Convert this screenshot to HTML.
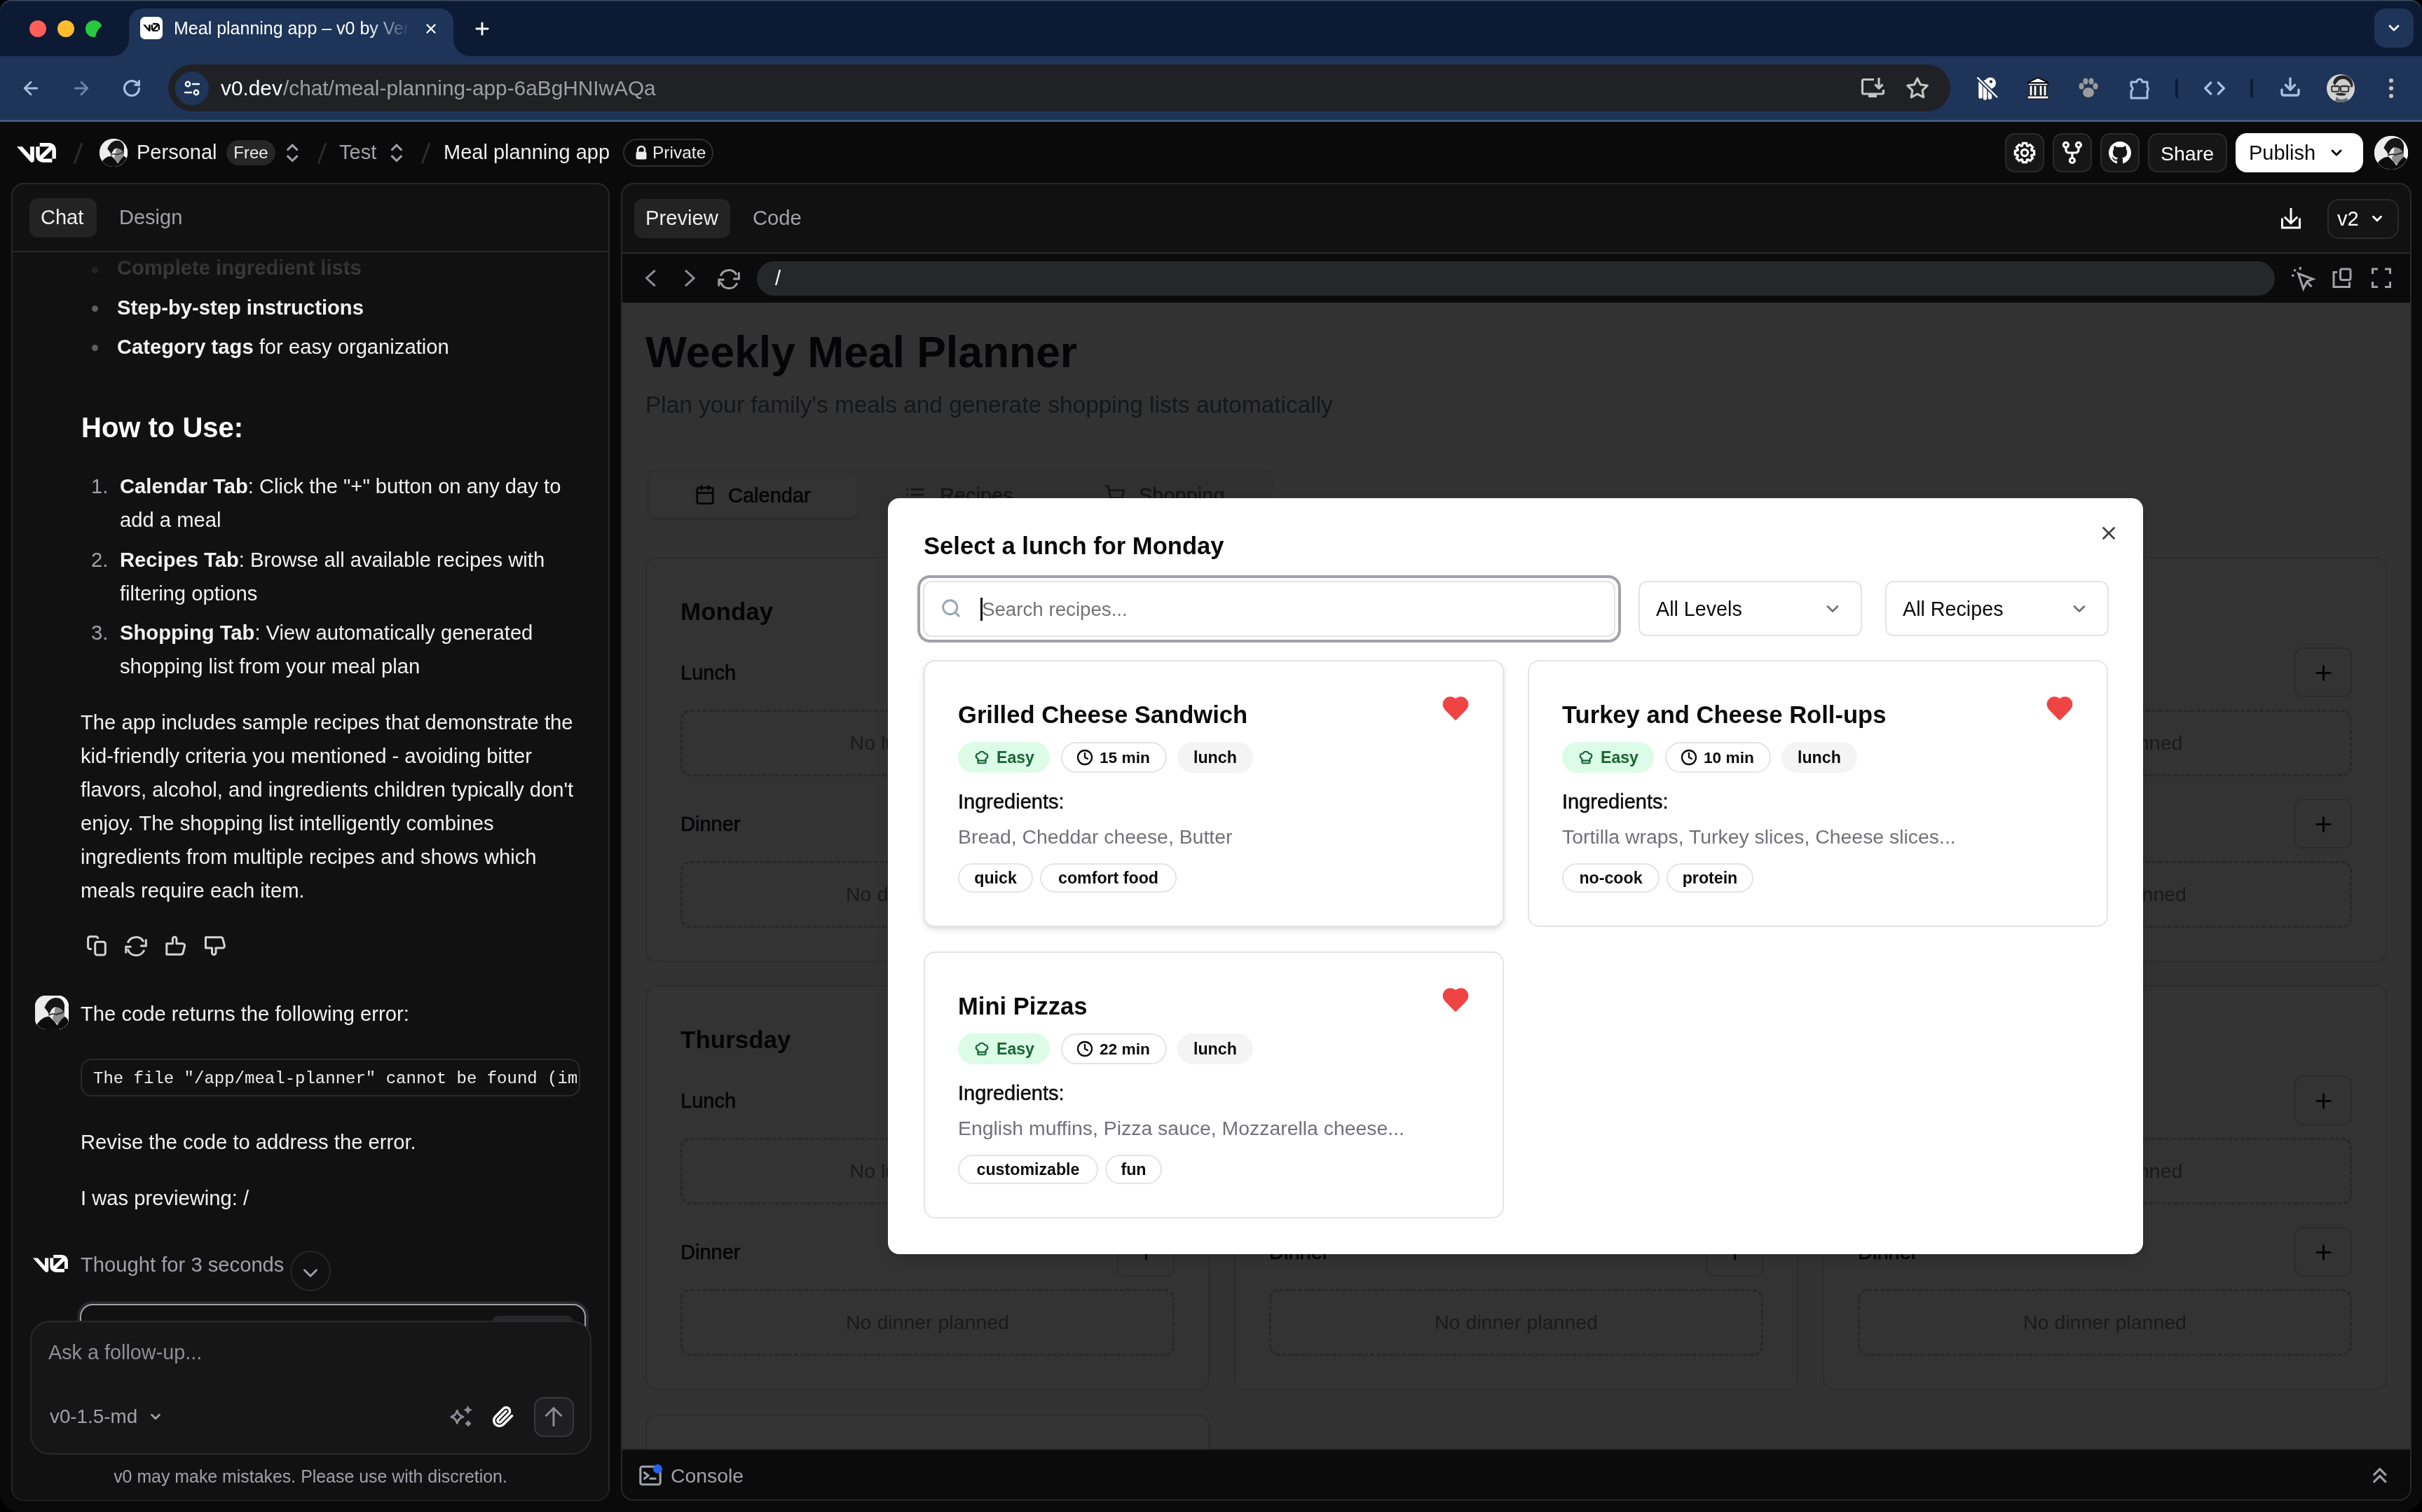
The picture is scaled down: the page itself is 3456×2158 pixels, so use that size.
<!DOCTYPE html><html><head><meta charset="utf-8"><title>v0</title><style>html,body{margin:0;padding:0;width:3456px;height:2158px;overflow:hidden;background:#0a0a0a;}#root{will-change:transform;position:relative;width:3456px;height:2158px;overflow:hidden;background:#0a0a0a;font-family:"Liberation Sans",sans-serif;}</style></head><body><div id="root">
<div style="position:absolute;left:0px;top:0px;width:3456px;height:40px;background:#000000;border-radius:0px;"></div>
<div style="position:absolute;left:0px;top:0px;width:3456px;height:174px;background:#0c1a33;border-radius:0px;border-radius:16px 16px 0 0;box-shadow:inset 0 1.5px 0 #3d4a5c;"></div>
<div style="position:absolute;left:42px;top:29px;width:24px;height:24px;background:#ff5f57;border-radius:12px;"></div>
<div style="position:absolute;left:82px;top:29px;width:24px;height:24px;background:#febc2e;border-radius:12px;"></div>
<div style="position:absolute;left:122px;top:29px;width:24px;height:24px;background:#28c840;border-radius:12px;"></div>
<div style="position:absolute;left:184px;top:12px;width:463px;height:70px;background:#1e3459;border-radius:0px;border-radius:20px 20px 0 0;"></div>
<div style="position:absolute;left:160px;top:56px;width:24px;height:24px;background:#1e3459;"></div>
<div style="position:absolute;left:136px;top:32px;width:48px;height:48px;background:#0c1a33;border-radius:50%;"></div>
<div style="position:absolute;left:647px;top:56px;width:24px;height:24px;background:#1e3459;"></div>
<div style="position:absolute;left:647px;top:32px;width:48px;height:48px;background:#0c1a33;border-radius:50%;"></div>
<div style="position:absolute;left:200px;top:24px;width:32px;height:32px;background:#ffffff;border-radius:7px;"></div>
<svg style="position:absolute;left:204px;top:33px;" width="24" height="12.0" viewBox="0 0 40 20"><g fill="#000"><path d="M23.3919 0H32.9188C36.7819 0 39.9136 3.13165 39.9136 6.99475V16.0805H36.0006V6.99475C36.0006 6.90167 35.9969 6.80925 35.9898 6.71766L26.4628 16.079C26.4949 16.08 26.5272 16.0805 26.5595 16.0805H36.0006V19.7762H26.5595C22.6964 19.7762 19.4788 16.6139 19.4788 12.7508V3.68923H23.3919V12.7508C23.3919 12.9253 23.4054 13.0977 23.4316 13.2668L33.1682 3.6995C33.0861 3.6927 33.003 3.68923 32.9188 3.68923H23.3919V0Z"/><path d="M13.7688 19.0956L0 3.68759H5.53933L13.6231 12.7337V3.68759H17.7535V17.5746C17.7535 19.6705 15.1654 20.6584 13.7688 19.0956Z"/></g></svg>
<div style="position:absolute;left:248px;top:20px;width:338px;height:40px;overflow:hidden;-webkit-mask-image:linear-gradient(90deg,#000 82%,transparent 100%);"><div style="position:absolute;left:0;top:0;line-height:40px;font-family:'Liberation Sans', sans-serif;font-size:25px;color:#fff;white-space:pre;">Meal planning app – v0 by Vercel</div></div>
<svg style="position:absolute;left:604.00px;top:30.00px;" width="22" height="22" viewBox="0 0 24 24" fill="none" stroke="#ffffff" stroke-width="2.6" stroke-linecap="round" stroke-linejoin="round"><path d="M18 6 6 18"/><path d="m6 6 12 12"/></svg>
<svg style="position:absolute;left:674.00px;top:27.00px;" width="28" height="28" viewBox="0 0 24 24" fill="none" stroke="#ffffff" stroke-width="2.4" stroke-linecap="round" stroke-linejoin="round"><path d="M5 12h14"/><path d="M12 5v14"/></svg>
<div style="position:absolute;left:3388px;top:12px;width:56px;height:56px;background:#1e3459;border-radius:16px;"></div>
<svg style="position:absolute;left:3404.00px;top:28.00px;" width="24" height="24" viewBox="0 0 24 24" fill="none" stroke="#ffffff" stroke-width="2.8" stroke-linecap="round" stroke-linejoin="round"><path d="m6 9 6 6 6-6"/></svg>
<div style="position:absolute;left:0px;top:80px;width:3456px;height:93px;background:#1e3459;border-radius:0px;"></div>
<div style="position:absolute;left:0px;top:171px;width:3456px;height:3px;background:#3f5a86;border-radius:0px;"></div>
<svg style="position:absolute;left:29.00px;top:111.00px;" width="30" height="30" viewBox="0 0 24 24" fill="none" stroke="#a9bfdf" stroke-width="2.3" stroke-linecap="round" stroke-linejoin="round"><path d="m12 19-7-7 7-7"/><path d="M19 12H5"/></svg>
<svg style="position:absolute;left:101.00px;top:111.00px;" width="30" height="30" viewBox="0 0 24 24" fill="none" stroke="#6d84a9" stroke-width="2.3" stroke-linecap="round" stroke-linejoin="round"><path d="M5 12h14"/><path d="m12 5 7 7-7 7"/></svg>
<svg style="position:absolute;left:174.00px;top:112.00px;" width="28" height="28" viewBox="0 0 24 24" fill="none" stroke="#a9bfdf" stroke-width="2.6" stroke-linecap="round" stroke-linejoin="round"><path d="M21 12a9 9 0 1 1-9-9c2.52 0 4.93 1 6.74 2.74L21 8"/><path d="M21 3v5h-5"/></svg>
<div style="position:absolute;left:240px;top:92px;width:2543px;height:67px;background:#202124;border-radius:34px;"></div>
<div style="position:absolute;left:250px;top:102px;width:48px;height:48px;background:#1e3459;border-radius:24px;"></div>
<svg style="position:absolute;left:260px;top:112px" width="28" height="28" viewBox="0 0 28 28" fill="none" stroke="#fff" stroke-width="2.4" stroke-linecap="round"><circle cx="8" cy="8" r="3.2"/><path d="M15 8h9"/><circle cx="20" cy="20" r="3.2"/><path d="M4 20h9"/></svg>
<div style="position:absolute;left:315px;top:107.67px;height:36px;line-height:36px;font-family:'Liberation Sans', sans-serif;font-size:29.8px;font-weight:400;color:#ffffff;white-space:pre;">v0.dev</div>
<div style="position:absolute;left:404px;top:107.67px;height:36px;line-height:36px;font-family:'Liberation Sans', sans-serif;font-size:29.8px;font-weight:400;color:#9aa0a6;white-space:pre;">/chat/meal-planning-app-6aBgHNIwAQa</div>
<svg style="position:absolute;left:2650px;top:100px;overflow:visible" width="50" height="50" viewBox="2650 100 50 50" fill="none" stroke="#c4c4c4" stroke-width="3.2" stroke-linecap="butt" stroke-linejoin="miter"><path d="M2674 113.5H2659.5a2 2 0 0 0-2 2V132a2 2 0 0 0 2 2H2685.5a2 2 0 0 0 2-2V128"/><path d="M2681 111V126M2675.5 120.5L2681 126L2686.5 120.5"/><path d="M2666 136.5H2678" stroke-width="5"/></svg>
<svg style="position:absolute;left:2719.00px;top:108.50px;" width="34" height="34" viewBox="0 0 24 24" fill="none" stroke="#c4c4c4" stroke-width="2.2" stroke-linecap="round" stroke-linejoin="round"><polygon points="12 2 15.09 8.26 22 9.27 17 14.14 18.18 21.02 12 17.77 5.82 21.02 7 14.14 2 9.27 8.91 8.26 12 2"/></svg>
<svg style="position:absolute;left:2815px;top:105px;overflow:visible" width="45" height="45" viewBox="2815 105 45 45" fill="none" stroke="#fff" stroke-width="2" stroke-linecap="butt" stroke-linejoin="round"><path d="M2826 117V138M2832.5 117V140M2839.5 125V139" stroke="#fff" stroke-width="5.5" stroke-linecap="round"/><circle cx="2840" cy="118.5" r="8" fill="#fff" stroke="none"/><circle cx="2841" cy="116.5" r="2.2" fill="#1e3459" stroke="none"/><path d="M2821.5 110.5L2850 139" stroke="#1e3459" stroke-width="6"/><path d="M2821.5 110.5L2850 139" stroke="#fff" stroke-width="2.4"/></svg>
<svg style="position:absolute;left:2890px;top:108px" width="36" height="36" viewBox="0 0 36 36"><path d="M18 3 33 10H3Z" fill="#fff" stroke="#000" stroke-width="1.5"/><rect x="4" y="11" width="28" height="3" fill="#fff" stroke="#000" stroke-width="1"/><rect x="6" y="14" width="4" height="15" fill="#fff" stroke="#000"/><rect x="12" y="14" width="4" height="15" fill="#fff" stroke="#000"/><rect x="20" y="14" width="4" height="15" fill="#fff" stroke="#000"/><rect x="26" y="14" width="4" height="15" fill="#fff" stroke="#000"/><rect x="3" y="29" width="30" height="4" fill="#fff" stroke="#000"/></svg>
<svg style="position:absolute;left:2964px;top:110px" width="32" height="32" viewBox="0 0 32 32" fill="#9b9b9b"><ellipse cx="16" cy="22" rx="8" ry="7"/><ellipse cx="6" cy="13" rx="3.5" ry="4.5"/><ellipse cx="12" cy="6" rx="3.5" ry="4.5"/><ellipse cx="20" cy="6" rx="3.5" ry="4.5"/><ellipse cx="26" cy="13" rx="3.5" ry="4.5"/></svg>
<svg style="position:absolute;left:3036px;top:108px" width="36" height="36" viewBox="0 0 36 36" fill="none" stroke="#a9bfdf" stroke-width="3" stroke-linejoin="round"><path d="M5 9h8a4 4 0 0 1 8 0h7v7a4 4 0 0 1 0 6v10H5V22a4 4 0 0 0 0-7Z"/></svg>
<div style="position:absolute;left:3104px;top:112px;width:4px;height:28px;background:#0d1c36;border-radius:2px;"></div>
<svg style="position:absolute;left:3144.00px;top:110.00px;" width="32" height="32" viewBox="0 0 24 24" fill="none" stroke="#a9bfdf" stroke-width="2.4" stroke-linecap="round" stroke-linejoin="round"><path d="m16 18 6-6-6-6"/><path d="m8 6-6 6 6 6"/></svg>
<div style="position:absolute;left:3211px;top:112px;width:4px;height:28px;background:#0d1c36;border-radius:2px;"></div>
<svg style="position:absolute;left:3252.00px;top:108.00px;" width="32" height="32" viewBox="0 0 24 24" fill="none" stroke="#a9bfdf" stroke-width="2.6" stroke-linecap="round" stroke-linejoin="round"><path d="M21 15v4a2 2 0 0 1-2 2H5a2 2 0 0 1-2-2v-4"/><polyline points="7 10 12 15 17 10"/><line x1="12" x2="12" y1="15" y2="3"/></svg>
<svg style="position:absolute;left:3320px;top:106px" width="40" height="40" viewBox="0 0 100 100"><defs><clipPath id="av2"><circle cx="50" cy="50" r="50"/></clipPath></defs><g clip-path="url(#av2)"><rect width="100" height="100" fill="#d4d4d4"/><path d="M22 30 Q30 2 60 4 Q90 6 94 40 L90 48 Q82 28 60 20 Q40 20 30 40Z" fill="#262626"/><ellipse cx="58" cy="55" rx="30" ry="38" fill="#cfcfcf"/><path d="M16 44 H88" stroke="#444" stroke-width="3"/><rect x="18" y="42" width="26" height="20" rx="5" fill="none" stroke="#333" stroke-width="5"/><rect x="50" y="42" width="28" height="20" rx="5" fill="none" stroke="#333" stroke-width="5"/><path d="M30 70 Q48 62 70 70 Q66 78 50 76 Q36 76 30 70Z" fill="#2a2a2a"/><path d="M34 80 Q50 98 72 84 L80 100 H30Z" fill="#6a6a6a"/><path d="M0 100 L0 85 Q20 92 34 100Z" fill="#333"/></g></svg>
<div style="position:absolute;left:3409px;top:112px;width:6px;height:6px;background:#c7c7c7;border-radius:3px;"></div>
<div style="position:absolute;left:3409px;top:123px;width:6px;height:6px;background:#c7c7c7;border-radius:3px;"></div>
<div style="position:absolute;left:3409px;top:134px;width:6px;height:6px;background:#c7c7c7;border-radius:3px;"></div>
<div style="position:absolute;left:0px;top:174px;width:3456px;height:88px;background:#0a0a0a;border-radius:0px;"></div>
<svg style="position:absolute;left:24px;top:204px;" width="56" height="28.0" viewBox="0 0 40 20"><g fill="#ffffff"><path d="M23.3919 0H32.9188C36.7819 0 39.9136 3.13165 39.9136 6.99475V16.0805H36.0006V6.99475C36.0006 6.90167 35.9969 6.80925 35.9898 6.71766L26.4628 16.079C26.4949 16.08 26.5272 16.0805 26.5595 16.0805H36.0006V19.7762H26.5595C22.6964 19.7762 19.4788 16.6139 19.4788 12.7508V3.68923H23.3919V12.7508C23.3919 12.9253 23.4054 13.0977 23.4316 13.2668L33.1682 3.6995C33.0861 3.6927 33.003 3.68923 32.9188 3.68923H23.3919V0Z"/><path d="M13.7688 19.0956L0 3.68759H5.53933L13.6231 12.7337V3.68759H17.7535V17.5746C17.7535 19.6705 15.1654 20.6584 13.7688 19.0956Z"/></g></svg>
<svg style="position:absolute;left:100px;top:200px;overflow:visible" width="20" height="40" viewBox="100 200 20 40" fill="none" stroke="#2c2c2c" stroke-width="3" stroke-linecap="butt" stroke-linejoin="round"><path d="M117 204L106.2 233.5"/></svg>
<div style="position:absolute;left:142px;top:198px;width:40px;height:40px;border-radius:50%;overflow:hidden;background:#f2f2f2;"><svg width="40" height="40" viewBox="0 0 100 100" style="position:absolute;left:0;top:0"><rect width="100" height="100" fill="#ececec"/><rect x="60" width="40" height="100" fill="#fafafa"/><path d="M58 52 Q56 30 72 28 Q90 30 88 52 Q88 75 70 85 Q55 80 52 65Z" fill="#8c8c8c"/><path d="M28 36 Q38 8 62 6 Q84 6 88 30 L86 52 Q80 38 70 36 Q58 30 50 40 Q44 50 42 56 Q36 44 28 36Z" fill="#161616"/><path d="M40 58 Q52 52 64 56 Q74 52 84 50" stroke="#2a2a2a" stroke-width="4" fill="none"/><path d="M0 100 L0 95 Q18 62 42 62 Q52 70 66 88 Q78 70 88 62 Q100 70 100 80 L100 100Z" fill="#0c0c0c"/></svg></div>
<div style="position:absolute;left:195px;top:200.45px;height:35px;line-height:35px;font-family:'Liberation Sans', sans-serif;font-size:29px;font-weight:400;color:#ededed;white-space:pre;">Personal</div>
<div style="position:absolute;left:323px;top:200px;width:70px;height:36px;background:#262626;border-radius:18px;"></div>
<div style="position:absolute;left:-642px;width:2000px;text-align:center;top:203.18px;height:29px;line-height:29px;font-family:'Liberation Sans', sans-serif;font-size:24px;font-weight:400;color:#ededed;white-space:pre;">Free</div>
<svg style="position:absolute;left:400px;top:200px;overflow:visible" width="40" height="40" viewBox="400 200 40 40" fill="none" stroke="#a1a1aa" stroke-width="3" stroke-linecap="butt" stroke-linejoin="miter"><path d="M409.8 214.5L417.2 207.1L424.6 214.5M409.8 222.1L417.2 229.5L424.6 222.1"/></svg>
<svg style="position:absolute;left:448px;top:200px;overflow:visible" width="20" height="40" viewBox="448 200 20 40" fill="none" stroke="#2c2c2c" stroke-width="3" stroke-linecap="butt" stroke-linejoin="round"><path d="M465 204L454.2 233.5"/></svg>
<div style="position:absolute;left:484px;top:200.45px;height:35px;line-height:35px;font-family:'Liberation Sans', sans-serif;font-size:29px;font-weight:400;color:#a1a1aa;white-space:pre;">Test</div>
<svg style="position:absolute;left:548px;top:200px;overflow:visible" width="40" height="40" viewBox="548 200 40 40" fill="none" stroke="#a1a1aa" stroke-width="3" stroke-linecap="butt" stroke-linejoin="miter"><path d="M558.5 214.5L565.9 207.1L573.3 214.5M558.5 222.1L565.9 229.5L573.3 222.1"/></svg>
<svg style="position:absolute;left:596px;top:200px;overflow:visible" width="20" height="40" viewBox="596 200 20 40" fill="none" stroke="#2c2c2c" stroke-width="3" stroke-linecap="butt" stroke-linejoin="round"><path d="M613 204L602.2 233.5"/></svg>
<div style="position:absolute;left:633px;top:200.45px;height:35px;line-height:35px;font-family:'Liberation Sans', sans-serif;font-size:29px;font-weight:400;color:#ededed;white-space:pre;">Meal planning app</div>
<div style="position:absolute;left:889px;top:198px;width:129px;height:40px;background:transparent;border:2px solid #2e2e2e;box-sizing:border-box;border-radius:20px;"></div>
<svg style="position:absolute;left:905px;top:207px" width="20" height="22" viewBox="0 0 20 22"><path d="M5 10V7a5 5 0 0 1 10 0v3" fill="none" stroke="#ededed" stroke-width="2.6"/><rect x="2.5" y="9.5" width="15" height="11" rx="2.5" fill="#ededed"/></svg>
<div style="position:absolute;left:931px;top:203.01px;height:29px;line-height:29px;font-family:'Liberation Sans', sans-serif;font-size:24.5px;font-weight:400;color:#ededed;white-space:pre;">Private</div>
<div style="position:absolute;left:2861px;top:190px;width:56px;height:56px;background:#161616;border:2px solid #2a2a2a;box-sizing:border-box;border-radius:14px;"></div>
<div style="position:absolute;left:2929px;top:190px;width:56px;height:56px;background:#161616;border:2px solid #2a2a2a;box-sizing:border-box;border-radius:14px;"></div>
<div style="position:absolute;left:2997px;top:190px;width:56px;height:56px;background:#161616;border:2px solid #2a2a2a;box-sizing:border-box;border-radius:14px;"></div>
<svg style="position:absolute;left:2873.00px;top:202.00px;overflow:visible" width="32" height="32" viewBox="0 0 16 16" fill="none" stroke="#ffffff" stroke-width="1.6" stroke-linecap="butt" stroke-linejoin="miter"><path d="M6.27 2.99 L6.67 1.18 L9.33 1.18 L9.73 2.99 L10.32 3.24 L11.89 2.24 L13.76 4.11 L12.76 5.68 L13.01 6.27 L14.82 6.67 L14.82 9.33 L13.01 9.73 L12.76 10.32 L13.76 11.89 L11.89 13.76 L10.32 12.76 L9.73 13.01 L9.33 14.82 L6.67 14.82 L6.27 13.01 L5.68 12.76 L4.11 13.76 L2.24 11.89 L3.24 10.32 L2.99 9.73 L1.18 9.33 L1.18 6.67 L2.99 6.27 L3.24 5.68 L2.24 4.11 L4.11 2.24 L5.68 3.24Z"/><circle cx="8" cy="8" r="2.3"/></svg>
<svg style="position:absolute;left:2941.00px;top:202.00px;overflow:visible" width="32" height="32" viewBox="0 0 16 16" fill="none" stroke="#ffffff" stroke-width="1.6" stroke-linecap="butt" stroke-linejoin="round"><circle cx="3.45" cy="2.4" r="1.75"/><circle cx="12.45" cy="2.4" r="1.75"/><circle cx="7.95" cy="13.5" r="1.75"/><path d="M3.45 4.15V6a2 2 0 0 0 2 2h5a2 2 0 0 0 2-2V4.15"/><path d="M7.95 8v3.75"/></svg>
<svg style="position:absolute;left:3009px;top:202px" width="32" height="32" viewBox="0 0 16 16" fill="#fff"><path d="M8 0C3.58 0 0 3.58 0 8c0 3.54 2.29 6.53 5.47 7.59.4.07.55-.17.55-.38 0-.19-.01-.82-.01-1.49-2.01.37-2.53-.49-2.69-.94-.09-.23-.48-.94-.82-1.13-.28-.15-.68-.52-.01-.53.63-.01 1.08.58 1.23.82.72 1.21 1.87.87 2.33.66.07-.52.28-.87.51-1.07-1.78-.2-3.64-.89-3.64-3.95 0-.87.31-1.59.82-2.15-.08-.2-.36-1.02.08-2.12 0 0 .67-.21 2.2.82.64-.18 1.32-.27 2-.27.68 0 1.36.09 2 .27 1.53-1.04 2.2-.82 2.2-.82.44 1.1.16 1.92.08 2.12.51.56.82 1.27.82 2.15 0 3.07-1.87 3.75-3.65 3.95.29.25.54.73.54 1.48 0 1.07-.01 1.93-.01 2.2 0 .21.15.46.55.38A8.013 8.013 0 0 0 16 8c0-4.42-3.58-8-8-8z"/></svg>
<div style="position:absolute;left:3065px;top:190px;width:113px;height:56px;background:#161616;border:2px solid #2a2a2a;box-sizing:border-box;border-radius:14px;"></div>
<div style="position:absolute;left:2121px;width:2000px;text-align:center;top:202.12px;height:34px;line-height:34px;font-family:'Liberation Sans', sans-serif;font-size:28.5px;font-weight:400;color:#ffffff;white-space:pre;">Share</div>
<div style="position:absolute;left:3190px;top:190px;width:182px;height:56px;background:#ffffff;border-radius:16px;"></div>
<div style="position:absolute;left:3209px;top:201.45px;height:35px;line-height:35px;font-family:'Liberation Sans', sans-serif;font-size:29px;font-weight:400;color:#0a0a0a;white-space:pre;">Publish</div>
<svg style="position:absolute;left:3322.00px;top:206.00px;" width="24" height="24" viewBox="0 0 24 24" fill="none" stroke="#0a0a0a" stroke-width="3" stroke-linecap="round" stroke-linejoin="round"><path d="m6 9 6 6 6-6"/></svg>
<div style="position:absolute;left:3388px;top:194px;width:48px;height:48px;border-radius:50%;overflow:hidden;background:#f2f2f2;"><svg width="48" height="48" viewBox="0 0 100 100" style="position:absolute;left:0;top:0"><rect width="100" height="100" fill="#ececec"/><rect x="60" width="40" height="100" fill="#fafafa"/><path d="M58 52 Q56 30 72 28 Q90 30 88 52 Q88 75 70 85 Q55 80 52 65Z" fill="#8c8c8c"/><path d="M28 36 Q38 8 62 6 Q84 6 88 30 L86 52 Q80 38 70 36 Q58 30 50 40 Q44 50 42 56 Q36 44 28 36Z" fill="#161616"/><path d="M40 58 Q52 52 64 56 Q74 52 84 50" stroke="#2a2a2a" stroke-width="4" fill="none"/><path d="M0 100 L0 95 Q18 62 42 62 Q52 70 66 88 Q78 70 88 62 Q100 70 100 80 L100 100Z" fill="#0c0c0c"/></svg></div>
<div style="position:absolute;left:16px;top:261px;width:854px;height:1881px;background:#111111;border:2px solid #27282c;box-sizing:border-box;border-radius:18px;"></div>
<div style="position:absolute;left:42px;top:283px;width:96px;height:56px;background:#232323;border-radius:12px;"></div>
<div style="position:absolute;left:58px;top:293.45px;height:35px;line-height:35px;font-family:'Liberation Sans', sans-serif;font-size:29px;font-weight:400;color:#ededed;white-space:pre;">Chat</div>
<div style="position:absolute;left:170px;top:293.45px;height:35px;line-height:35px;font-family:'Liberation Sans', sans-serif;font-size:29px;font-weight:400;color:#a1a1aa;white-space:pre;">Design</div>
<div style="position:absolute;left:18px;top:358px;width:850px;height:2px;background:#27282c;border-radius:0px;"></div>
<div style="position:absolute;left:18px;top:360px;width:850px;height:1500px;overflow:hidden;">
</div>
<div style="position:absolute;left:131px;top:381px;width:9px;height:9px;background:#2c2c30;border-radius:5px;"></div>
<div style="position:absolute;left:167px;top:365.38px;height:35px;line-height:35px;font-family:'Liberation Sans', sans-serif;font-size:29.2px;font-weight:700;color:#464648;white-space:pre;">Complete ingredient lists</div>
<div style="position:absolute;left:131px;top:436px;width:9px;height:9px;background:#5c5c63;border-radius:5px;"></div>
<div style="position:absolute;left:167px;top:421.88px;height:35px;line-height:35px;font-family:'Liberation Sans', sans-serif;font-size:29.2px;font-weight:700;color:#f2f2f2;white-space:pre;">Step-by-step instructions</div>
<div style="position:absolute;left:131px;top:492px;width:9px;height:9px;background:#5c5c63;border-radius:5px;"></div>
<div style="position:absolute;left:167px;top:477.88px;height:35px;line-height:35px;font-family:'Liberation Sans', sans-serif;font-size:29.2px;font-weight:400;color:#f2f2f2;white-space:pre;"><b>Category tags</b> for easy organization</div>
<div style="position:absolute;left:116px;top:586.13px;height:48px;line-height:48px;font-family:'Liberation Sans', sans-serif;font-size:40px;font-weight:700;color:#ffffff;white-space:pre;">How to Use:</div>
<div style="position:absolute;left:130px;top:676.88px;height:35px;line-height:35px;font-family:'Liberation Sans', sans-serif;font-size:29.2px;font-weight:400;color:#a1a1aa;white-space:pre;">1.</div>
<div style="position:absolute;left:171px;top:676.88px;height:35px;line-height:35px;font-family:'Liberation Sans', sans-serif;font-size:29.2px;font-weight:400;color:#f2f2f2;white-space:pre;"><b>Calendar Tab</b>: Click the "+" button on any day to</div>
<div style="position:absolute;left:171px;top:724.88px;height:35px;line-height:35px;font-family:'Liberation Sans', sans-serif;font-size:29.2px;font-weight:400;color:#f2f2f2;white-space:pre;">add a meal</div>
<div style="position:absolute;left:130px;top:781.88px;height:35px;line-height:35px;font-family:'Liberation Sans', sans-serif;font-size:29.2px;font-weight:400;color:#a1a1aa;white-space:pre;">2.</div>
<div style="position:absolute;left:171px;top:781.88px;height:35px;line-height:35px;font-family:'Liberation Sans', sans-serif;font-size:29.2px;font-weight:400;color:#f2f2f2;white-space:pre;"><b>Recipes Tab</b>: Browse all available recipes with</div>
<div style="position:absolute;left:171px;top:829.88px;height:35px;line-height:35px;font-family:'Liberation Sans', sans-serif;font-size:29.2px;font-weight:400;color:#f2f2f2;white-space:pre;">filtering options</div>
<div style="position:absolute;left:130px;top:885.88px;height:35px;line-height:35px;font-family:'Liberation Sans', sans-serif;font-size:29.2px;font-weight:400;color:#a1a1aa;white-space:pre;">3.</div>
<div style="position:absolute;left:171px;top:885.88px;height:35px;line-height:35px;font-family:'Liberation Sans', sans-serif;font-size:29.2px;font-weight:400;color:#f2f2f2;white-space:pre;"><b>Shopping Tab</b>: View automatically generated</div>
<div style="position:absolute;left:171px;top:933.88px;height:35px;line-height:35px;font-family:'Liberation Sans', sans-serif;font-size:29.2px;font-weight:400;color:#f2f2f2;white-space:pre;">shopping list from your meal plan</div>
<div style="position:absolute;left:115px;top:1013.88px;height:35px;line-height:35px;font-family:'Liberation Sans', sans-serif;font-size:29.2px;font-weight:400;color:#f2f2f2;white-space:pre;">The app includes sample recipes that demonstrate the</div>
<div style="position:absolute;left:115px;top:1061.88px;height:35px;line-height:35px;font-family:'Liberation Sans', sans-serif;font-size:29.2px;font-weight:400;color:#f2f2f2;white-space:pre;">kid-friendly criteria you mentioned - avoiding bitter</div>
<div style="position:absolute;left:115px;top:1109.88px;height:35px;line-height:35px;font-family:'Liberation Sans', sans-serif;font-size:29.2px;font-weight:400;color:#f2f2f2;white-space:pre;">flavors, alcohol, and ingredients children typically don't</div>
<div style="position:absolute;left:115px;top:1157.88px;height:35px;line-height:35px;font-family:'Liberation Sans', sans-serif;font-size:29.2px;font-weight:400;color:#f2f2f2;white-space:pre;">enjoy. The shopping list intelligently combines</div>
<div style="position:absolute;left:115px;top:1205.88px;height:35px;line-height:35px;font-family:'Liberation Sans', sans-serif;font-size:29.2px;font-weight:400;color:#f2f2f2;white-space:pre;">ingredients from multiple recipes and shows which</div>
<div style="position:absolute;left:115px;top:1253.88px;height:35px;line-height:35px;font-family:'Liberation Sans', sans-serif;font-size:29.2px;font-weight:400;color:#f2f2f2;white-space:pre;">meals require each item.</div>
<svg style="position:absolute;left:122.00px;top:1334.00px;overflow:visible" width="32" height="32" viewBox="0 0 16 16" fill="none" stroke="#d4d4d8" stroke-width="1.5" stroke-linecap="butt" stroke-linejoin="round"><path d="M8.9 3V2.85a1.5 1.5 0 0 0-1.5-1.5H3.3a1.5 1.5 0 0 0-1.5 1.5V8.8a1.5 1.5 0 0 0 1.5 1.5h1.15"/><rect x="6.85" y="5.15" width="7.3" height="9.4" rx="1.5"/></svg>
<svg style="position:absolute;left:178.00px;top:1334.00px;overflow:visible" width="32" height="32" viewBox="0 0 16 16" fill="none" stroke="#d4d4d8" stroke-width="1.5" stroke-linecap="butt" stroke-linejoin="miter"><path d="M2.1 5.8A6.3 6.3 0 0 1 13.5 5.1"/><path d="M15.15 3.2V7.95H11.1"/><path d="M13.95 11A6.3 6.3 0 0 1 2.1 10.2"/><path d="M0.9 13.2V8.65H4.7"/></svg>
<svg style="position:absolute;left:235.00px;top:1334.00px;overflow:visible" width="32" height="32" viewBox="0 0 16 16" fill="none" stroke="#d4d4d8" stroke-width="1.5" stroke-linecap="butt" stroke-linejoin="round"><path d="M1.4 6.35H5.7V3a1.375 1.375 0 0 1 2.75 0V6.35H12.8a1.5 1.5 0 0 1 1.45 1.85L13 13a1.5 1.5 0 0 1-1.45 1.1H1.4Z"/></svg>
<svg style="position:absolute;left:290.90px;top:1334.00px;overflow:visible" width="32" height="32" viewBox="0 0 16 16" fill="none" stroke="#d4d4d8" stroke-width="1.5" stroke-linecap="butt" stroke-linejoin="round"><path d="M1.25 1.85H12a1.5 1.5 0 0 1 1.45 1.1L14.7 7.8a1.5 1.5 0 0 1-1.45 1.75H8.5V12.9a1.375 1.375 0 0 1-2.75 0V9.55H1.25Z"/></svg>
<div style="position:absolute;left:50px;top:1421px;width:48px;height:48px;border-radius:15px;overflow:hidden;background:#f2f2f2;"><svg width="48" height="48" viewBox="0 0 100 100" style="position:absolute;left:0;top:0"><rect width="100" height="100" fill="#ececec"/><rect x="60" width="40" height="100" fill="#fafafa"/><path d="M58 52 Q56 30 72 28 Q90 30 88 52 Q88 75 70 85 Q55 80 52 65Z" fill="#8c8c8c"/><path d="M28 36 Q38 8 62 6 Q84 6 88 30 L86 52 Q80 38 70 36 Q58 30 50 40 Q44 50 42 56 Q36 44 28 36Z" fill="#161616"/><path d="M40 58 Q52 52 64 56 Q74 52 84 50" stroke="#2a2a2a" stroke-width="4" fill="none"/><path d="M0 100 L0 95 Q18 62 42 62 Q52 70 66 88 Q78 70 88 62 Q100 70 100 80 L100 100Z" fill="#0c0c0c"/></svg></div>
<div style="position:absolute;left:115px;top:1429.88px;height:35px;line-height:35px;font-family:'Liberation Sans', sans-serif;font-size:29.2px;font-weight:400;color:#f2f2f2;white-space:pre;">The code returns the following error:</div>
<div style="position:absolute;left:115px;top:1511px;width:713px;height:54px;background:#111111;border:2px solid #2a2a2a;box-sizing:border-box;border-radius:16px;"></div>
<div style="position:absolute;left:117px;top:1513px;width:708px;height:50px;overflow:hidden;border-radius:14px;">
</div>
<div style="position:absolute;left:133px;width:690px;overflow:hidden;top:1525.11px;height:29px;line-height:29px;font-family:'Liberation Mono', monospace;font-size:24px;font-weight:400;color:#ededed;white-space:pre;">The file "/app/meal-planner" cannot be found (im</div>
<div style="position:absolute;left:115px;top:1612.88px;height:35px;line-height:35px;font-family:'Liberation Sans', sans-serif;font-size:29.2px;font-weight:400;color:#f2f2f2;white-space:pre;">Revise the code to address the error.</div>
<div style="position:absolute;left:115px;top:1692.88px;height:35px;line-height:35px;font-family:'Liberation Sans', sans-serif;font-size:29.2px;font-weight:400;color:#f2f2f2;white-space:pre;">I was previewing: /</div>
<svg style="position:absolute;left:47px;top:1791px;" width="50" height="25.0" viewBox="0 0 40 20"><g fill="#ffffff"><path d="M23.3919 0H32.9188C36.7819 0 39.9136 3.13165 39.9136 6.99475V16.0805H36.0006V6.99475C36.0006 6.90167 35.9969 6.80925 35.9898 6.71766L26.4628 16.079C26.4949 16.08 26.5272 16.0805 26.5595 16.0805H36.0006V19.7762H26.5595C22.6964 19.7762 19.4788 16.6139 19.4788 12.7508V3.68923H23.3919V12.7508C23.3919 12.9253 23.4054 13.0977 23.4316 13.2668L33.1682 3.6995C33.0861 3.6927 33.003 3.68923 32.9188 3.68923H23.3919V0Z"/><path d="M13.7688 19.0956L0 3.68759H5.53933L13.6231 12.7337V3.68759H17.7535V17.5746C17.7535 19.6705 15.1654 20.6584 13.7688 19.0956Z"/></g></svg>
<div style="position:absolute;left:115px;top:1787.88px;height:35px;line-height:35px;font-family:'Liberation Sans', sans-serif;font-size:29.2px;font-weight:400;color:#a1a1aa;white-space:pre;">Thought for 3 seconds</div>
<div style="position:absolute;left:414px;top:1785px;width:58px;height:58px;background:transparent;border:2px solid #262626;box-sizing:border-box;border-radius:29px;"></div>
<svg style="position:absolute;left:426.00px;top:1800.00px;" width="34" height="34" viewBox="0 0 24 24" fill="none" stroke="#a1a1aa" stroke-width="2.0" stroke-linecap="round" stroke-linejoin="round"><path d="m6 9 6 6 6-6"/></svg>
<div style="position:absolute;left:701px;top:1878px;width:118px;height:40px;background:#1f1f1f;border-radius:10px;"></div>
<div style="position:absolute;left:18px;top:360px;width:850px;height:60px;background:linear-gradient(rgba(17,17,17,.6) 0%,rgba(17,17,17,.15) 60%,rgba(17,17,17,0) 100%);"></div>
<div style="position:absolute;left:18px;top:1862px;width:850px;height:279px;background:#111111;border-radius:0px;border-radius:0 0 16px 16px;"></div>
<div style="position:absolute;left:114px;top:1861px;width:722px;height:60px;background:#111111;border:2.5px solid #a1a1aa;box-sizing:border-box;border-radius:0px;border-bottom:none;border-radius:18px 18px 0 0;box-shadow:0 0 0 4px #28282b;"></div>
<div style="position:absolute;left:701px;top:1878px;width:118px;height:10px;background:#27272a;border-radius:0px;border-radius:10px 10px 0 0;"></div>
<div style="position:absolute;left:43px;top:1885px;width:801px;height:191px;background:#161616;border:2px solid #2a2a2a;box-sizing:border-box;border-radius:28px;"></div>
<div style="position:absolute;left:69px;top:1912.52px;height:35px;line-height:35px;font-family:'Liberation Sans', sans-serif;font-size:28.8px;font-weight:400;color:#8e8e96;white-space:pre;">Ask a follow-up...</div>
<div style="position:absolute;left:71px;top:2004.86px;height:33px;line-height:33px;font-family:'Liberation Sans', sans-serif;font-size:27.8px;font-weight:400;color:#a1a1aa;white-space:pre;">v0-1.5-md</div>
<svg style="position:absolute;left:211.00px;top:2011.00px;" width="22" height="22" viewBox="0 0 24 24" fill="none" stroke="#a1a1aa" stroke-width="3" stroke-linecap="round" stroke-linejoin="round"><path d="m6 9 6 6 6-6"/></svg>
<svg style="position:absolute;left:635px;top:1995px;overflow:visible" width="50" height="50" viewBox="635 1995 50 50" fill="none" stroke="#8b8b94" stroke-width="3" stroke-linecap="butt" stroke-linejoin="round"><path d="M652.3 2013.2Q654 2020.5 660.8 2022.2Q654 2024 652.3 2031.2Q650.6 2024 643.8 2022.2Q650.6 2020.5 652.3 2013.2Z" stroke-width="3"/><path d="M667.6 2007.3Q668.5 2011.4 672.6 2012.3Q668.5 2013.2 667.6 2017.3Q666.7 2013.2 662.6 2012.3Q666.7 2011.4 667.6 2007.3Z" fill="#8b8b94" stroke-width="1.5"/><path d="M668 2028.2L671.5 2031.7L668 2035.2L664.5 2031.7Z" fill="#8b8b94" stroke-width="1.5"/></svg>
<svg style="position:absolute;left:702.00px;top:2006.00px;" width="32" height="32" viewBox="0 0 24 24" fill="none" stroke="#ffffff" stroke-width="2.6" stroke-linecap="round" stroke-linejoin="round"><path d="m21.44 11.05-9.19 9.19a6 6 0 0 1-8.49-8.49l8.57-8.57A4 4 0 1 1 18 8.84l-8.59 8.57a2 2 0 0 1-2.83-2.83l8.49-8.48"/></svg>
<div style="position:absolute;left:762px;top:1994px;width:57px;height:57px;background:#1f1f22;border:2px solid #38383c;box-sizing:border-box;border-radius:14px;"></div>
<svg style="position:absolute;left:770px;top:2000px;overflow:visible" width="40" height="40" viewBox="770 2000 40 40" fill="none" stroke="#8b8b94" stroke-width="3" stroke-linecap="butt" stroke-linejoin="miter"><path d="M790 2009v26.8M778.5 2021.3L790 2009.8L801.5 2021.3"/></svg>
<div style="position:absolute;left:-557px;width:2000px;text-align:center;top:2092.37px;height:30px;line-height:30px;font-family:'Liberation Sans', sans-serif;font-size:24.9px;font-weight:400;color:#a1a1aa;white-space:pre;">v0 may make mistakes. Please use with discretion.</div>
<div style="position:absolute;left:886px;top:261px;width:2555px;height:1881px;background:#111111;border:2px solid #27282c;box-sizing:border-box;border-radius:18px;"></div>
<div style="position:absolute;left:905px;top:284px;width:137px;height:56px;background:#232323;border-radius:12px;"></div>
<div style="position:absolute;left:921px;top:294.38px;height:35px;line-height:35px;font-family:'Liberation Sans', sans-serif;font-size:29.2px;font-weight:400;color:#ededed;white-space:pre;">Preview</div>
<div style="position:absolute;left:1074px;top:294.38px;height:35px;line-height:35px;font-family:'Liberation Sans', sans-serif;font-size:29.2px;font-weight:400;color:#a1a1aa;white-space:pre;">Code</div>
<svg style="position:absolute;left:3250px;top:290px;overflow:visible" width="40" height="40" viewBox="3250 290 40 40" fill="none" stroke="#ffffff" stroke-width="3" stroke-linecap="butt" stroke-linejoin="miter"><path d="M3269 297v21.5M3259.8 309.5l9.2 9.2 9.2-9.2M3256.5 311.5v13.5h25v-13.5"/></svg>
<div style="position:absolute;left:3321px;top:284px;width:102px;height:57px;background:#141414;border:2px solid #2a2a2a;box-sizing:border-box;border-radius:16px;"></div>
<div style="position:absolute;left:3335px;top:295.38px;height:35px;line-height:35px;font-family:'Liberation Sans', sans-serif;font-size:29.2px;font-weight:400;color:#ffffff;white-space:pre;">v2</div>
<svg style="position:absolute;left:3381.00px;top:301.00px;" width="22" height="22" viewBox="0 0 24 24" fill="none" stroke="#ffffff" stroke-width="3.2" stroke-linecap="round" stroke-linejoin="round"><path d="m6 9 6 6 6-6"/></svg>
<div style="position:absolute;left:888px;top:360px;width:2551px;height:2px;background:#27282c;border-radius:0px;"></div>
<div style="position:absolute;left:888px;top:362px;width:2551px;height:70px;background:#0b0b0b;border-radius:0px;"></div>
<svg style="position:absolute;left:900px;top:370px;overflow:visible" width="120" height="60" viewBox="900 370 120 60" fill="none" stroke="#8e8e96" stroke-width="3" stroke-linecap="butt" stroke-linejoin="miter"><path d="M934.7 385.8L922.6 397L934.7 408.2"/><path d="M978 385.8L990.1 397L978 408.2"/></svg>
<svg style="position:absolute;left:1024.00px;top:381.70px;overflow:visible" width="32" height="32" viewBox="0 0 16 16" fill="none" stroke="#a1a1aa" stroke-width="1.5" stroke-linecap="butt" stroke-linejoin="miter"><path d="M2.1 5.8A6.3 6.3 0 0 1 13.5 5.1"/><path d="M15.15 3.2V7.95H11.1"/><path d="M13.95 11A6.3 6.3 0 0 1 2.1 10.2"/><path d="M0.9 13.2V8.65H4.7"/></svg>
<div style="position:absolute;left:1080px;top:373px;width:2166px;height:49px;background:#26272b;border-radius:25px;"></div>
<div style="position:absolute;left:1106px;top:380.45px;height:35px;line-height:35px;font-family:'Liberation Sans', sans-serif;font-size:29px;font-weight:400;color:#ffffff;white-space:pre;">/</div>
<svg style="position:absolute;left:3260px;top:370px;overflow:visible" width="170" height="55" viewBox="3260 370 170 55" fill="none" stroke="#a1a1aa" stroke-width="3" stroke-linecap="butt" stroke-linejoin="miter"><path d="M3279.5 390.5L3300.5 398.3L3292 401.5L3286.7 412Z" stroke-linejoin="miter"/><path d="M3291.5 402L3298.5 409.3"/><path d="M3270 393.2h3.5M3273.3 384.6l2.4 2.4M3282.3 381v4"/><rect x="3339.5" y="384" width="14.5" height="15.5" rx="2.5"/><path d="M3335 388.5H3330v21h22.5v-7"/><path d="M3385.5 391v-7h7.5M3403 384h7.5v7M3410.5 402v7.5h-7.5M3393 409.5h-7.5V402"/></svg>
<div style="position:absolute;left:888px;top:432px;width:2551px;height:1636px;overflow:hidden;background:#323232;">
<div style="position:absolute;left:33px;top:32.87px;height:75px;line-height:75px;font-family:'Liberation Sans', sans-serif;font-size:62.4px;font-weight:700;color:#050507;white-space:pre;">Weekly Meal Planner</div>
<div style="position:absolute;left:33px;top:126.42px;height:40px;line-height:40px;font-family:'Liberation Sans', sans-serif;font-size:33.4px;font-weight:400;color:#141619;white-space:pre;">Plan your family's meals and generate shopping lists automatically</div>
<div style="position:absolute;left:34px;top:239px;width:896px;height:71px;background:#303031;border-radius:12px;"></div>
<div style="position:absolute;left:39px;top:243px;width:296px;height:64px;background:#333333;border-radius:10px;box-shadow:0 1px 3px rgba(0,0,0,.15);"></div>
<svg style="position:absolute;left:103.00px;top:259.00px;" width="30" height="30" viewBox="0 0 24 24" fill="none" stroke="#050507" stroke-width="2.2" stroke-linecap="round" stroke-linejoin="round"><rect width="18" height="18" x="3" y="4" rx="2"/><path d="M16 2v4"/><path d="M8 2v4"/><path d="M3 10h18"/></svg>
<div style="position:absolute;left:151px;top:257.95px;height:35px;line-height:35px;font-family:'Liberation Sans', sans-serif;font-size:29px;font-weight:400;color:#050507;white-space:pre;-webkit-text-stroke:0.6px currentColor;">Calendar</div>
<svg style="position:absolute;left:403.00px;top:259.00px;" width="30" height="30" viewBox="0 0 24 24" fill="none" stroke="#151515" stroke-width="2.2" stroke-linecap="round" stroke-linejoin="round"><path d="M3 12h.01"/><path d="M3 18h.01"/><path d="M3 6h.01"/><path d="M8 12h13"/><path d="M8 18h13"/><path d="M8 6h13"/></svg>
<div style="position:absolute;left:453px;top:257.95px;height:35px;line-height:35px;font-family:'Liberation Sans', sans-serif;font-size:29px;font-weight:400;color:#151515;white-space:pre;-webkit-text-stroke:0.6px currentColor;">Recipes</div>
<svg style="position:absolute;left:688.00px;top:259.00px;" width="30" height="30" viewBox="0 0 24 24" fill="none" stroke="#151515" stroke-width="2.2" stroke-linecap="round" stroke-linejoin="round"><circle cx="8" cy="21" r="1"/><circle cx="19" cy="21" r="1"/><path d="M2.05 2.05h2l2.66 12.42a2 2 0 0 0 2 1.58h9.78a2 2 0 0 0 1.95-1.57l1.65-7.43H5.12"/></svg>
<div style="position:absolute;left:737px;top:257.95px;height:35px;line-height:35px;font-family:'Liberation Sans', sans-serif;font-size:29px;font-weight:400;color:#151515;white-space:pre;-webkit-text-stroke:0.6px currentColor;">Shopping</div>
<div style="position:absolute;left:33px;top:363px;width:805px;height:578px;background:#333333;border:2px solid #2c2c2c;box-sizing:border-box;border-radius:16px;"></div>
<div style="position:absolute;left:83px;top:419.87px;height:42px;line-height:42px;font-family:'Liberation Sans', sans-serif;font-size:35px;font-weight:700;color:#050507;white-space:pre;">Monday</div>
<div style="position:absolute;left:83px;top:511.45px;height:35px;line-height:35px;font-family:'Liberation Sans', sans-serif;font-size:29px;font-weight:400;color:#050507;white-space:pre;-webkit-text-stroke:0.6px currentColor;">Lunch</div>
<div style="position:absolute;left:706px;top:492px;width:82px;height:71px;background:transparent;border:2px solid #2b2b2b;box-sizing:border-box;border-radius:12px;"></div>
<svg style="position:absolute;left:730.50px;top:511.50px;" width="33" height="33" viewBox="0 0 24 24" fill="none" stroke="#050507" stroke-width="2.2" stroke-linecap="round" stroke-linejoin="round"><path d="M5 12h14"/><path d="M12 5v14"/></svg>
<div style="position:absolute;left:83px;top:581px;width:705px;height:95px;background:transparent;border:3px dashed #282828;box-sizing:border-box;border-radius:14px;"></div>
<div style="position:absolute;left:-564.5px;width:2000px;text-align:center;top:611.12px;height:34px;line-height:34px;font-family:'Liberation Sans', sans-serif;font-size:28.5px;font-weight:400;color:#1a1a1c;white-space:pre;">No lunch planned</div>
<div style="position:absolute;left:83px;top:727.45px;height:35px;line-height:35px;font-family:'Liberation Sans', sans-serif;font-size:29px;font-weight:400;color:#050507;white-space:pre;-webkit-text-stroke:0.6px currentColor;">Dinner</div>
<div style="position:absolute;left:706px;top:708px;width:82px;height:71px;background:transparent;border:2px solid #2b2b2b;box-sizing:border-box;border-radius:12px;"></div>
<svg style="position:absolute;left:730.50px;top:727.50px;" width="33" height="33" viewBox="0 0 24 24" fill="none" stroke="#050507" stroke-width="2.2" stroke-linecap="round" stroke-linejoin="round"><path d="M5 12h14"/><path d="M12 5v14"/></svg>
<div style="position:absolute;left:83px;top:797px;width:705px;height:95px;background:transparent;border:3px dashed #282828;box-sizing:border-box;border-radius:14px;"></div>
<div style="position:absolute;left:-564.5px;width:2000px;text-align:center;top:827.12px;height:34px;line-height:34px;font-family:'Liberation Sans', sans-serif;font-size:28.5px;font-weight:400;color:#1a1a1c;white-space:pre;">No dinner planned</div>
<div style="position:absolute;left:873px;top:363px;width:805px;height:578px;background:#333333;border:2px solid #2c2c2c;box-sizing:border-box;border-radius:16px;"></div>
<div style="position:absolute;left:923px;top:419.87px;height:42px;line-height:42px;font-family:'Liberation Sans', sans-serif;font-size:35px;font-weight:700;color:#050507;white-space:pre;">Tuesday</div>
<div style="position:absolute;left:923px;top:511.45px;height:35px;line-height:35px;font-family:'Liberation Sans', sans-serif;font-size:29px;font-weight:400;color:#050507;white-space:pre;-webkit-text-stroke:0.6px currentColor;">Lunch</div>
<div style="position:absolute;left:1546px;top:492px;width:82px;height:71px;background:transparent;border:2px solid #2b2b2b;box-sizing:border-box;border-radius:12px;"></div>
<svg style="position:absolute;left:1570.50px;top:511.50px;" width="33" height="33" viewBox="0 0 24 24" fill="none" stroke="#050507" stroke-width="2.2" stroke-linecap="round" stroke-linejoin="round"><path d="M5 12h14"/><path d="M12 5v14"/></svg>
<div style="position:absolute;left:923px;top:581px;width:705px;height:95px;background:transparent;border:3px dashed #282828;box-sizing:border-box;border-radius:14px;"></div>
<div style="position:absolute;left:275.5px;width:2000px;text-align:center;top:611.12px;height:34px;line-height:34px;font-family:'Liberation Sans', sans-serif;font-size:28.5px;font-weight:400;color:#1a1a1c;white-space:pre;">No lunch planned</div>
<div style="position:absolute;left:923px;top:727.45px;height:35px;line-height:35px;font-family:'Liberation Sans', sans-serif;font-size:29px;font-weight:400;color:#050507;white-space:pre;-webkit-text-stroke:0.6px currentColor;">Dinner</div>
<div style="position:absolute;left:1546px;top:708px;width:82px;height:71px;background:transparent;border:2px solid #2b2b2b;box-sizing:border-box;border-radius:12px;"></div>
<svg style="position:absolute;left:1570.50px;top:727.50px;" width="33" height="33" viewBox="0 0 24 24" fill="none" stroke="#050507" stroke-width="2.2" stroke-linecap="round" stroke-linejoin="round"><path d="M5 12h14"/><path d="M12 5v14"/></svg>
<div style="position:absolute;left:923px;top:797px;width:705px;height:95px;background:transparent;border:3px dashed #282828;box-sizing:border-box;border-radius:14px;"></div>
<div style="position:absolute;left:275.5px;width:2000px;text-align:center;top:827.12px;height:34px;line-height:34px;font-family:'Liberation Sans', sans-serif;font-size:28.5px;font-weight:400;color:#1a1a1c;white-space:pre;">No dinner planned</div>
<div style="position:absolute;left:1713px;top:363px;width:805px;height:578px;background:#333333;border:2px solid #2c2c2c;box-sizing:border-box;border-radius:16px;"></div>
<div style="position:absolute;left:1763px;top:419.87px;height:42px;line-height:42px;font-family:'Liberation Sans', sans-serif;font-size:35px;font-weight:700;color:#050507;white-space:pre;">Wednesday</div>
<div style="position:absolute;left:1763px;top:511.45px;height:35px;line-height:35px;font-family:'Liberation Sans', sans-serif;font-size:29px;font-weight:400;color:#050507;white-space:pre;-webkit-text-stroke:0.6px currentColor;">Lunch</div>
<div style="position:absolute;left:2386px;top:492px;width:82px;height:71px;background:transparent;border:2px solid #2b2b2b;box-sizing:border-box;border-radius:12px;"></div>
<svg style="position:absolute;left:2410.50px;top:511.50px;" width="33" height="33" viewBox="0 0 24 24" fill="none" stroke="#050507" stroke-width="2.2" stroke-linecap="round" stroke-linejoin="round"><path d="M5 12h14"/><path d="M12 5v14"/></svg>
<div style="position:absolute;left:1763px;top:581px;width:705px;height:95px;background:transparent;border:3px dashed #282828;box-sizing:border-box;border-radius:14px;"></div>
<div style="position:absolute;left:1115.5px;width:2000px;text-align:center;top:611.12px;height:34px;line-height:34px;font-family:'Liberation Sans', sans-serif;font-size:28.5px;font-weight:400;color:#1a1a1c;white-space:pre;">No lunch planned</div>
<div style="position:absolute;left:1763px;top:727.45px;height:35px;line-height:35px;font-family:'Liberation Sans', sans-serif;font-size:29px;font-weight:400;color:#050507;white-space:pre;-webkit-text-stroke:0.6px currentColor;">Dinner</div>
<div style="position:absolute;left:2386px;top:708px;width:82px;height:71px;background:transparent;border:2px solid #2b2b2b;box-sizing:border-box;border-radius:12px;"></div>
<svg style="position:absolute;left:2410.50px;top:727.50px;" width="33" height="33" viewBox="0 0 24 24" fill="none" stroke="#050507" stroke-width="2.2" stroke-linecap="round" stroke-linejoin="round"><path d="M5 12h14"/><path d="M12 5v14"/></svg>
<div style="position:absolute;left:1763px;top:797px;width:705px;height:95px;background:transparent;border:3px dashed #282828;box-sizing:border-box;border-radius:14px;"></div>
<div style="position:absolute;left:1115.5px;width:2000px;text-align:center;top:827.12px;height:34px;line-height:34px;font-family:'Liberation Sans', sans-serif;font-size:28.5px;font-weight:400;color:#1a1a1c;white-space:pre;">No dinner planned</div>
<div style="position:absolute;left:33px;top:974px;width:805px;height:578px;background:#333333;border:2px solid #2c2c2c;box-sizing:border-box;border-radius:16px;"></div>
<div style="position:absolute;left:83px;top:1030.87px;height:42px;line-height:42px;font-family:'Liberation Sans', sans-serif;font-size:35px;font-weight:700;color:#050507;white-space:pre;">Thursday</div>
<div style="position:absolute;left:83px;top:1122.45px;height:35px;line-height:35px;font-family:'Liberation Sans', sans-serif;font-size:29px;font-weight:400;color:#050507;white-space:pre;-webkit-text-stroke:0.6px currentColor;">Lunch</div>
<div style="position:absolute;left:706px;top:1103px;width:82px;height:71px;background:transparent;border:2px solid #2b2b2b;box-sizing:border-box;border-radius:12px;"></div>
<svg style="position:absolute;left:730.50px;top:1122.50px;" width="33" height="33" viewBox="0 0 24 24" fill="none" stroke="#050507" stroke-width="2.2" stroke-linecap="round" stroke-linejoin="round"><path d="M5 12h14"/><path d="M12 5v14"/></svg>
<div style="position:absolute;left:83px;top:1192px;width:705px;height:95px;background:transparent;border:3px dashed #282828;box-sizing:border-box;border-radius:14px;"></div>
<div style="position:absolute;left:-564.5px;width:2000px;text-align:center;top:1222.12px;height:34px;line-height:34px;font-family:'Liberation Sans', sans-serif;font-size:28.5px;font-weight:400;color:#1a1a1c;white-space:pre;">No lunch planned</div>
<div style="position:absolute;left:83px;top:1338.45px;height:35px;line-height:35px;font-family:'Liberation Sans', sans-serif;font-size:29px;font-weight:400;color:#050507;white-space:pre;-webkit-text-stroke:0.6px currentColor;">Dinner</div>
<div style="position:absolute;left:706px;top:1319px;width:82px;height:71px;background:transparent;border:2px solid #2b2b2b;box-sizing:border-box;border-radius:12px;"></div>
<svg style="position:absolute;left:730.50px;top:1338.50px;" width="33" height="33" viewBox="0 0 24 24" fill="none" stroke="#050507" stroke-width="2.2" stroke-linecap="round" stroke-linejoin="round"><path d="M5 12h14"/><path d="M12 5v14"/></svg>
<div style="position:absolute;left:83px;top:1408px;width:705px;height:95px;background:transparent;border:3px dashed #282828;box-sizing:border-box;border-radius:14px;"></div>
<div style="position:absolute;left:-564.5px;width:2000px;text-align:center;top:1438.12px;height:34px;line-height:34px;font-family:'Liberation Sans', sans-serif;font-size:28.5px;font-weight:400;color:#1a1a1c;white-space:pre;">No dinner planned</div>
<div style="position:absolute;left:873px;top:974px;width:805px;height:578px;background:#333333;border:2px solid #2c2c2c;box-sizing:border-box;border-radius:16px;"></div>
<div style="position:absolute;left:923px;top:1030.87px;height:42px;line-height:42px;font-family:'Liberation Sans', sans-serif;font-size:35px;font-weight:700;color:#050507;white-space:pre;">Friday</div>
<div style="position:absolute;left:923px;top:1122.45px;height:35px;line-height:35px;font-family:'Liberation Sans', sans-serif;font-size:29px;font-weight:400;color:#050507;white-space:pre;-webkit-text-stroke:0.6px currentColor;">Lunch</div>
<div style="position:absolute;left:1546px;top:1103px;width:82px;height:71px;background:transparent;border:2px solid #2b2b2b;box-sizing:border-box;border-radius:12px;"></div>
<svg style="position:absolute;left:1570.50px;top:1122.50px;" width="33" height="33" viewBox="0 0 24 24" fill="none" stroke="#050507" stroke-width="2.2" stroke-linecap="round" stroke-linejoin="round"><path d="M5 12h14"/><path d="M12 5v14"/></svg>
<div style="position:absolute;left:923px;top:1192px;width:705px;height:95px;background:transparent;border:3px dashed #282828;box-sizing:border-box;border-radius:14px;"></div>
<div style="position:absolute;left:275.5px;width:2000px;text-align:center;top:1222.12px;height:34px;line-height:34px;font-family:'Liberation Sans', sans-serif;font-size:28.5px;font-weight:400;color:#1a1a1c;white-space:pre;">No lunch planned</div>
<div style="position:absolute;left:923px;top:1338.45px;height:35px;line-height:35px;font-family:'Liberation Sans', sans-serif;font-size:29px;font-weight:400;color:#050507;white-space:pre;-webkit-text-stroke:0.6px currentColor;">Dinner</div>
<div style="position:absolute;left:1546px;top:1319px;width:82px;height:71px;background:transparent;border:2px solid #2b2b2b;box-sizing:border-box;border-radius:12px;"></div>
<svg style="position:absolute;left:1570.50px;top:1338.50px;" width="33" height="33" viewBox="0 0 24 24" fill="none" stroke="#050507" stroke-width="2.2" stroke-linecap="round" stroke-linejoin="round"><path d="M5 12h14"/><path d="M12 5v14"/></svg>
<div style="position:absolute;left:923px;top:1408px;width:705px;height:95px;background:transparent;border:3px dashed #282828;box-sizing:border-box;border-radius:14px;"></div>
<div style="position:absolute;left:275.5px;width:2000px;text-align:center;top:1438.12px;height:34px;line-height:34px;font-family:'Liberation Sans', sans-serif;font-size:28.5px;font-weight:400;color:#1a1a1c;white-space:pre;">No dinner planned</div>
<div style="position:absolute;left:1713px;top:974px;width:805px;height:578px;background:#333333;border:2px solid #2c2c2c;box-sizing:border-box;border-radius:16px;"></div>
<div style="position:absolute;left:1763px;top:1030.87px;height:42px;line-height:42px;font-family:'Liberation Sans', sans-serif;font-size:35px;font-weight:700;color:#050507;white-space:pre;">Saturday</div>
<div style="position:absolute;left:1763px;top:1122.45px;height:35px;line-height:35px;font-family:'Liberation Sans', sans-serif;font-size:29px;font-weight:400;color:#050507;white-space:pre;-webkit-text-stroke:0.6px currentColor;">Lunch</div>
<div style="position:absolute;left:2386px;top:1103px;width:82px;height:71px;background:transparent;border:2px solid #2b2b2b;box-sizing:border-box;border-radius:12px;"></div>
<svg style="position:absolute;left:2410.50px;top:1122.50px;" width="33" height="33" viewBox="0 0 24 24" fill="none" stroke="#050507" stroke-width="2.2" stroke-linecap="round" stroke-linejoin="round"><path d="M5 12h14"/><path d="M12 5v14"/></svg>
<div style="position:absolute;left:1763px;top:1192px;width:705px;height:95px;background:transparent;border:3px dashed #282828;box-sizing:border-box;border-radius:14px;"></div>
<div style="position:absolute;left:1115.5px;width:2000px;text-align:center;top:1222.12px;height:34px;line-height:34px;font-family:'Liberation Sans', sans-serif;font-size:28.5px;font-weight:400;color:#1a1a1c;white-space:pre;">No lunch planned</div>
<div style="position:absolute;left:1763px;top:1338.45px;height:35px;line-height:35px;font-family:'Liberation Sans', sans-serif;font-size:29px;font-weight:400;color:#050507;white-space:pre;-webkit-text-stroke:0.6px currentColor;">Dinner</div>
<div style="position:absolute;left:2386px;top:1319px;width:82px;height:71px;background:transparent;border:2px solid #2b2b2b;box-sizing:border-box;border-radius:12px;"></div>
<svg style="position:absolute;left:2410.50px;top:1338.50px;" width="33" height="33" viewBox="0 0 24 24" fill="none" stroke="#050507" stroke-width="2.2" stroke-linecap="round" stroke-linejoin="round"><path d="M5 12h14"/><path d="M12 5v14"/></svg>
<div style="position:absolute;left:1763px;top:1408px;width:705px;height:95px;background:transparent;border:3px dashed #282828;box-sizing:border-box;border-radius:14px;"></div>
<div style="position:absolute;left:1115.5px;width:2000px;text-align:center;top:1438.12px;height:34px;line-height:34px;font-family:'Liberation Sans', sans-serif;font-size:28.5px;font-weight:400;color:#1a1a1c;white-space:pre;">No dinner planned</div>
<div style="position:absolute;left:33px;top:1587px;width:805px;height:578px;background:#333333;border:2px solid #2c2c2c;box-sizing:border-box;border-radius:16px;"></div>
<div style="position:absolute;left:83px;top:1643.87px;height:42px;line-height:42px;font-family:'Liberation Sans', sans-serif;font-size:35px;font-weight:700;color:#050507;white-space:pre;">Sunday</div>
<div style="position:absolute;left:83px;top:1735.45px;height:35px;line-height:35px;font-family:'Liberation Sans', sans-serif;font-size:29px;font-weight:400;color:#050507;white-space:pre;-webkit-text-stroke:0.6px currentColor;">Lunch</div>
<div style="position:absolute;left:706px;top:1716px;width:82px;height:71px;background:transparent;border:2px solid #2b2b2b;box-sizing:border-box;border-radius:12px;"></div>
<svg style="position:absolute;left:730.50px;top:1735.50px;" width="33" height="33" viewBox="0 0 24 24" fill="none" stroke="#050507" stroke-width="2.2" stroke-linecap="round" stroke-linejoin="round"><path d="M5 12h14"/><path d="M12 5v14"/></svg>
<div style="position:absolute;left:83px;top:1805px;width:705px;height:95px;background:transparent;border:3px dashed #282828;box-sizing:border-box;border-radius:14px;"></div>
<div style="position:absolute;left:-564.5px;width:2000px;text-align:center;top:1835.12px;height:34px;line-height:34px;font-family:'Liberation Sans', sans-serif;font-size:28.5px;font-weight:400;color:#1a1a1c;white-space:pre;">No lunch planned</div>
<div style="position:absolute;left:83px;top:1951.45px;height:35px;line-height:35px;font-family:'Liberation Sans', sans-serif;font-size:29px;font-weight:400;color:#050507;white-space:pre;-webkit-text-stroke:0.6px currentColor;">Dinner</div>
<div style="position:absolute;left:706px;top:1932px;width:82px;height:71px;background:transparent;border:2px solid #2b2b2b;box-sizing:border-box;border-radius:12px;"></div>
<svg style="position:absolute;left:730.50px;top:1951.50px;" width="33" height="33" viewBox="0 0 24 24" fill="none" stroke="#050507" stroke-width="2.2" stroke-linecap="round" stroke-linejoin="round"><path d="M5 12h14"/><path d="M12 5v14"/></svg>
<div style="position:absolute;left:83px;top:2021px;width:705px;height:95px;background:transparent;border:3px dashed #282828;box-sizing:border-box;border-radius:14px;"></div>
<div style="position:absolute;left:-564.5px;width:2000px;text-align:center;top:2051.12px;height:34px;line-height:34px;font-family:'Liberation Sans', sans-serif;font-size:28.5px;font-weight:400;color:#1a1a1c;white-space:pre;">No dinner planned</div>
</div>
<div style="position:absolute;left:888px;top:2068px;width:2551px;height:72px;background:#0b0b0b;border-radius:0px;border-radius:0 0 16px 16px;"></div>
<svg style="position:absolute;left:911.00px;top:2089.00px;" width="34" height="34" viewBox="0 0 24 24" fill="none" stroke="#a1a1aa" stroke-width="2.2" stroke-linecap="round" stroke-linejoin="round"><rect x="2" y="3" width="20" height="18" rx="2"/><path d="m6 9 4 3-4 3"/><path d="M12 15h5"/></svg>
<div style="position:absolute;left:932px;top:2090px;width:13px;height:13px;background:#2563eb;border-radius:7px;"></div>
<div style="position:absolute;left:957px;top:2089.15px;height:34px;line-height:34px;font-family:'Liberation Sans', sans-serif;font-size:28.4px;font-weight:400;color:#a1a1aa;white-space:pre;">Console</div>
<svg style="position:absolute;left:3380px;top:2085px;overflow:visible" width="40" height="40" viewBox="3380 2085 40 40" fill="none" stroke="#a1a1aa" stroke-width="3" stroke-linecap="butt" stroke-linejoin="miter"><path d="M3386.8 2105.6L3395.8 2096.6L3404.8 2105.6M3386.8 2115.6L3395.8 2106.6L3404.8 2115.6"/></svg>
<div style="position:absolute;left:888px;top:2068px;width:2551px;height:2px;background:#1c1c1e;border-radius:0px;"></div>
<div style="position:absolute;left:1267px;top:711px;width:1791px;height:1079px;background:#ffffff;border-radius:16px;box-shadow:0 8px 16px rgba(0,0,0,.12);"></div>
<div style="position:absolute;left:1318px;top:758.00px;height:42px;line-height:42px;font-family:'Liberation Sans', sans-serif;font-size:34.6px;font-weight:700;color:#0a0a0a;white-space:pre;">Select a lunch for Monday</div>
<svg style="position:absolute;left:2994.00px;top:746.00px;" width="30" height="30" viewBox="0 0 24 24" fill="none" stroke="#404040" stroke-width="2.2" stroke-linecap="round" stroke-linejoin="round"><path d="M18 6 6 18"/><path d="m6 6 12 12"/></svg>
<div style="position:absolute;left:1309px;top:821px;width:1004px;height:96px;background:transparent;border:4px solid #a1a1aa;box-sizing:border-box;border-radius:18px;"></div>
<div style="position:absolute;left:1317px;top:829px;width:988px;height:80px;background:#ffffff;border:2px solid #e4e4e7;box-sizing:border-box;border-radius:12px;"></div>
<svg style="position:absolute;left:1342.00px;top:853.00px;" width="30" height="30" viewBox="0 0 24 24" fill="none" stroke="#94a3b8" stroke-width="2.3" stroke-linecap="round" stroke-linejoin="round"><circle cx="11" cy="11" r="8"/><path d="m21 21-4.3-4.3"/></svg>
<div style="position:absolute;left:1399px;top:853px;width:3px;height:33px;background:#0a0a0a;border-radius:0px;"></div>
<div style="position:absolute;left:1401px;top:852.90px;height:33px;line-height:33px;font-family:'Liberation Sans', sans-serif;font-size:27.7px;font-weight:400;color:#737373;white-space:pre;">Search recipes...</div>
<div style="position:absolute;left:2338px;top:829px;width:319px;height:79px;background:#ffffff;border:2px solid #e4e4e7;box-sizing:border-box;border-radius:12px;"></div>
<div style="position:absolute;left:2363px;top:852.05px;height:34px;line-height:34px;font-family:'Liberation Sans', sans-serif;font-size:28.7px;font-weight:400;color:#0a0a0a;white-space:pre;">All Levels</div>
<svg style="position:absolute;left:2601.00px;top:855.00px;" width="28" height="28" viewBox="0 0 24 24" fill="none" stroke="#737373" stroke-width="2.4" stroke-linecap="round" stroke-linejoin="round"><path d="m6 9 6 6 6-6"/></svg>
<div style="position:absolute;left:2690px;top:829px;width:319px;height:79px;background:#ffffff;border:2px solid #e4e4e7;box-sizing:border-box;border-radius:12px;"></div>
<div style="position:absolute;left:2715px;top:852.05px;height:34px;line-height:34px;font-family:'Liberation Sans', sans-serif;font-size:28.7px;font-weight:400;color:#0a0a0a;white-space:pre;">All Recipes</div>
<svg style="position:absolute;left:2953.00px;top:855.00px;" width="28" height="28" viewBox="0 0 24 24" fill="none" stroke="#737373" stroke-width="2.4" stroke-linecap="round" stroke-linejoin="round"><path d="m6 9 6 6 6-6"/></svg>
<div style="position:absolute;left:1318px;top:942px;width:828px;height:381px;background:#ffffff;border:2px solid #e5e5e5;box-sizing:border-box;border-radius:16px;box-shadow:0 4px 10px rgba(0,0,0,.10),0 2px 4px rgba(0,0,0,.06);"></div>
<div style="position:absolute;left:1367px;top:999.00px;height:42px;line-height:42px;font-family:'Liberation Sans', sans-serif;font-size:34.6px;font-weight:700;color:#0a0a0a;white-space:pre;">Grilled Cheese Sandwich</div>
<svg style="position:absolute;left:2057.00px;top:991.00px;" width="40" height="40" viewBox="0 0 24 24" fill="#ef4444" stroke="#ef4444" stroke-width="2" stroke-linecap="round" stroke-linejoin="round"><path d="M19 14c1.49-1.46 3-3.21 3-5.5A5.5 5.5 0 0 0 16.5 3c-1.76 0-3 .5-4.5 2-1.5-1.5-2.74-2-4.5-2A5.5 5.5 0 0 0 2 8.5c0 2.3 1.5 4.05 3 5.5l7 7Z"/></svg>
<div style="position:absolute;left:1367px;top:1059px;width:131px;height:44px;background:#dcfce7;border-radius:22px;"></div>
<svg style="position:absolute;left:1390.00px;top:1070.00px;" width="22" height="22" viewBox="0 0 24 24" fill="none" stroke="#166534" stroke-width="2.4" stroke-linecap="round" stroke-linejoin="round"><path d="M17 21a1 1 0 0 0 1-1v-5.35c0-.457.316-.844.727-1.041a4 4 0 0 0-2.134-7.589 5 5 0 0 0-9.186 0 4 4 0 0 0-2.134 7.588c.411.198.727.585.727 1.041V20a1 1 0 0 0 1 1Z"/><path d="M6 17h12"/></svg>
<div style="position:absolute;left:1422px;top:1066.99px;height:28px;line-height:28px;font-family:'Liberation Sans', sans-serif;font-size:23.1px;font-weight:700;color:#166534;white-space:pre;">Easy</div>
<div style="position:absolute;left:1514px;top:1059px;width:151px;height:44px;background:#ffffff;border:2px solid #e4e4e7;box-sizing:border-box;border-radius:22px;"></div>
<svg style="position:absolute;left:1536.00px;top:1069.00px;" width="24" height="24" viewBox="0 0 24 24" fill="none" stroke="#0a0a0a" stroke-width="2.3" stroke-linecap="round" stroke-linejoin="round"><circle cx="12" cy="12" r="10"/><polyline points="12 6 12 12 16 14"/></svg>
<div style="position:absolute;left:1569px;top:1067.63px;height:27px;line-height:27px;font-family:'Liberation Sans', sans-serif;font-size:22.7px;font-weight:700;color:#0a0a0a;white-space:pre;">15 min</div>
<div style="position:absolute;left:1680px;top:1059px;width:108px;height:44px;background:#f4f4f5;border-radius:22px;"></div>
<div style="position:absolute;left:1703px;top:1066.96px;height:28px;line-height:28px;font-family:'Liberation Sans', sans-serif;font-size:23.2px;font-weight:700;color:#0a0a0a;white-space:pre;">lunch</div>
<div style="position:absolute;left:1367px;top:1127.45px;height:35px;line-height:35px;font-family:'Liberation Sans', sans-serif;font-size:29px;font-weight:400;color:#0a0a0a;white-space:pre;-webkit-text-stroke:0.5px #0a0a0a;">Ingredients:</div>
<div style="position:absolute;left:1367px;top:1177.15px;height:34px;line-height:34px;font-family:'Liberation Sans', sans-serif;font-size:28.4px;font-weight:400;color:#71717a;white-space:pre;">Bread, Cheddar cheese, Butter</div>
<div style="position:absolute;left:1367px;top:1232px;width:107px;height:42px;background:#ffffff;border:2px solid #e4e4e7;box-sizing:border-box;border-radius:21px;"></div>
<div style="position:absolute;left:420.5px;width:2000px;text-align:center;top:1238.96px;height:28px;line-height:28px;font-family:'Liberation Sans', sans-serif;font-size:23.2px;font-weight:700;color:#0a0a0a;white-space:pre;">quick</div>
<div style="position:absolute;left:1484px;top:1232px;width:195px;height:42px;background:#ffffff;border:2px solid #e4e4e7;box-sizing:border-box;border-radius:21px;"></div>
<div style="position:absolute;left:581.5px;width:2000px;text-align:center;top:1238.96px;height:28px;line-height:28px;font-family:'Liberation Sans', sans-serif;font-size:23.2px;font-weight:700;color:#0a0a0a;white-space:pre;">comfort food</div>
<div style="position:absolute;left:2180px;top:942px;width:828px;height:381px;background:#ffffff;border:2px solid #e5e5e5;box-sizing:border-box;border-radius:16px;"></div>
<div style="position:absolute;left:2229px;top:999.00px;height:42px;line-height:42px;font-family:'Liberation Sans', sans-serif;font-size:34.6px;font-weight:700;color:#0a0a0a;white-space:pre;">Turkey and Cheese Roll-ups</div>
<svg style="position:absolute;left:2919.00px;top:991.00px;" width="40" height="40" viewBox="0 0 24 24" fill="#ef4444" stroke="#ef4444" stroke-width="2" stroke-linecap="round" stroke-linejoin="round"><path d="M19 14c1.49-1.46 3-3.21 3-5.5A5.5 5.5 0 0 0 16.5 3c-1.76 0-3 .5-4.5 2-1.5-1.5-2.74-2-4.5-2A5.5 5.5 0 0 0 2 8.5c0 2.3 1.5 4.05 3 5.5l7 7Z"/></svg>
<div style="position:absolute;left:2229px;top:1059px;width:131px;height:44px;background:#dcfce7;border-radius:22px;"></div>
<svg style="position:absolute;left:2252.00px;top:1070.00px;" width="22" height="22" viewBox="0 0 24 24" fill="none" stroke="#166534" stroke-width="2.4" stroke-linecap="round" stroke-linejoin="round"><path d="M17 21a1 1 0 0 0 1-1v-5.35c0-.457.316-.844.727-1.041a4 4 0 0 0-2.134-7.589 5 5 0 0 0-9.186 0 4 4 0 0 0-2.134 7.588c.411.198.727.585.727 1.041V20a1 1 0 0 0 1 1Z"/><path d="M6 17h12"/></svg>
<div style="position:absolute;left:2284px;top:1066.99px;height:28px;line-height:28px;font-family:'Liberation Sans', sans-serif;font-size:23.1px;font-weight:700;color:#166534;white-space:pre;">Easy</div>
<div style="position:absolute;left:2376px;top:1059px;width:151px;height:44px;background:#ffffff;border:2px solid #e4e4e7;box-sizing:border-box;border-radius:22px;"></div>
<svg style="position:absolute;left:2398.00px;top:1069.00px;" width="24" height="24" viewBox="0 0 24 24" fill="none" stroke="#0a0a0a" stroke-width="2.3" stroke-linecap="round" stroke-linejoin="round"><circle cx="12" cy="12" r="10"/><polyline points="12 6 12 12 16 14"/></svg>
<div style="position:absolute;left:2431px;top:1067.63px;height:27px;line-height:27px;font-family:'Liberation Sans', sans-serif;font-size:22.7px;font-weight:700;color:#0a0a0a;white-space:pre;">10 min</div>
<div style="position:absolute;left:2542px;top:1059px;width:108px;height:44px;background:#f4f4f5;border-radius:22px;"></div>
<div style="position:absolute;left:2565px;top:1066.96px;height:28px;line-height:28px;font-family:'Liberation Sans', sans-serif;font-size:23.2px;font-weight:700;color:#0a0a0a;white-space:pre;">lunch</div>
<div style="position:absolute;left:2229px;top:1127.45px;height:35px;line-height:35px;font-family:'Liberation Sans', sans-serif;font-size:29px;font-weight:400;color:#0a0a0a;white-space:pre;-webkit-text-stroke:0.5px #0a0a0a;">Ingredients:</div>
<div style="position:absolute;left:2229px;top:1177.15px;height:34px;line-height:34px;font-family:'Liberation Sans', sans-serif;font-size:28.4px;font-weight:400;color:#71717a;white-space:pre;">Tortilla wraps, Turkey slices, Cheese slices...</div>
<div style="position:absolute;left:2229px;top:1232px;width:139px;height:42px;background:#ffffff;border:2px solid #e4e4e7;box-sizing:border-box;border-radius:21px;"></div>
<div style="position:absolute;left:1298.5px;width:2000px;text-align:center;top:1238.96px;height:28px;line-height:28px;font-family:'Liberation Sans', sans-serif;font-size:23.2px;font-weight:700;color:#0a0a0a;white-space:pre;">no-cook</div>
<div style="position:absolute;left:2378px;top:1232px;width:124px;height:42px;background:#ffffff;border:2px solid #e4e4e7;box-sizing:border-box;border-radius:21px;"></div>
<div style="position:absolute;left:1440.0px;width:2000px;text-align:center;top:1238.96px;height:28px;line-height:28px;font-family:'Liberation Sans', sans-serif;font-size:23.2px;font-weight:700;color:#0a0a0a;white-space:pre;">protein</div>
<div style="position:absolute;left:1318px;top:1358px;width:828px;height:381px;background:#ffffff;border:2px solid #e5e5e5;box-sizing:border-box;border-radius:16px;"></div>
<div style="position:absolute;left:1367px;top:1415.00px;height:42px;line-height:42px;font-family:'Liberation Sans', sans-serif;font-size:34.6px;font-weight:700;color:#0a0a0a;white-space:pre;">Mini Pizzas</div>
<svg style="position:absolute;left:2057.00px;top:1407.00px;" width="40" height="40" viewBox="0 0 24 24" fill="#ef4444" stroke="#ef4444" stroke-width="2" stroke-linecap="round" stroke-linejoin="round"><path d="M19 14c1.49-1.46 3-3.21 3-5.5A5.5 5.5 0 0 0 16.5 3c-1.76 0-3 .5-4.5 2-1.5-1.5-2.74-2-4.5-2A5.5 5.5 0 0 0 2 8.5c0 2.3 1.5 4.05 3 5.5l7 7Z"/></svg>
<div style="position:absolute;left:1367px;top:1475px;width:131px;height:44px;background:#dcfce7;border-radius:22px;"></div>
<svg style="position:absolute;left:1390.00px;top:1486.00px;" width="22" height="22" viewBox="0 0 24 24" fill="none" stroke="#166534" stroke-width="2.4" stroke-linecap="round" stroke-linejoin="round"><path d="M17 21a1 1 0 0 0 1-1v-5.35c0-.457.316-.844.727-1.041a4 4 0 0 0-2.134-7.589 5 5 0 0 0-9.186 0 4 4 0 0 0-2.134 7.588c.411.198.727.585.727 1.041V20a1 1 0 0 0 1 1Z"/><path d="M6 17h12"/></svg>
<div style="position:absolute;left:1422px;top:1482.99px;height:28px;line-height:28px;font-family:'Liberation Sans', sans-serif;font-size:23.1px;font-weight:700;color:#166534;white-space:pre;">Easy</div>
<div style="position:absolute;left:1514px;top:1475px;width:151px;height:44px;background:#ffffff;border:2px solid #e4e4e7;box-sizing:border-box;border-radius:22px;"></div>
<svg style="position:absolute;left:1536.00px;top:1485.00px;" width="24" height="24" viewBox="0 0 24 24" fill="none" stroke="#0a0a0a" stroke-width="2.3" stroke-linecap="round" stroke-linejoin="round"><circle cx="12" cy="12" r="10"/><polyline points="12 6 12 12 16 14"/></svg>
<div style="position:absolute;left:1569px;top:1483.63px;height:27px;line-height:27px;font-family:'Liberation Sans', sans-serif;font-size:22.7px;font-weight:700;color:#0a0a0a;white-space:pre;">22 min</div>
<div style="position:absolute;left:1680px;top:1475px;width:108px;height:44px;background:#f4f4f5;border-radius:22px;"></div>
<div style="position:absolute;left:1703px;top:1482.96px;height:28px;line-height:28px;font-family:'Liberation Sans', sans-serif;font-size:23.2px;font-weight:700;color:#0a0a0a;white-space:pre;">lunch</div>
<div style="position:absolute;left:1367px;top:1543.45px;height:35px;line-height:35px;font-family:'Liberation Sans', sans-serif;font-size:29px;font-weight:400;color:#0a0a0a;white-space:pre;-webkit-text-stroke:0.5px #0a0a0a;">Ingredients:</div>
<div style="position:absolute;left:1367px;top:1593.15px;height:34px;line-height:34px;font-family:'Liberation Sans', sans-serif;font-size:28.4px;font-weight:400;color:#71717a;white-space:pre;">English muffins, Pizza sauce, Mozzarella cheese...</div>
<div style="position:absolute;left:1367px;top:1648px;width:200px;height:42px;background:#ffffff;border:2px solid #e4e4e7;box-sizing:border-box;border-radius:21px;"></div>
<div style="position:absolute;left:467.0px;width:2000px;text-align:center;top:1654.96px;height:28px;line-height:28px;font-family:'Liberation Sans', sans-serif;font-size:23.2px;font-weight:700;color:#0a0a0a;white-space:pre;">customizable</div>
<div style="position:absolute;left:1577px;top:1648px;width:81px;height:42px;background:#ffffff;border:2px solid #e4e4e7;box-sizing:border-box;border-radius:21px;"></div>
<div style="position:absolute;left:617.5px;width:2000px;text-align:center;top:1654.96px;height:28px;line-height:28px;font-family:'Liberation Sans', sans-serif;font-size:23.2px;font-weight:700;color:#0a0a0a;white-space:pre;">fun</div>
<div style="position:absolute;left:0;top:2130px;width:28px;height:28px;background:radial-gradient(circle at 100% 0,rgba(0,0,0,0) 27px,#000 28.5px);"></div>
<div style="position:absolute;left:3428px;top:2130px;width:28px;height:28px;background:radial-gradient(circle at 0 0,rgba(0,0,0,0) 27px,#000 28.5px);"></div>
</div></body></html>
